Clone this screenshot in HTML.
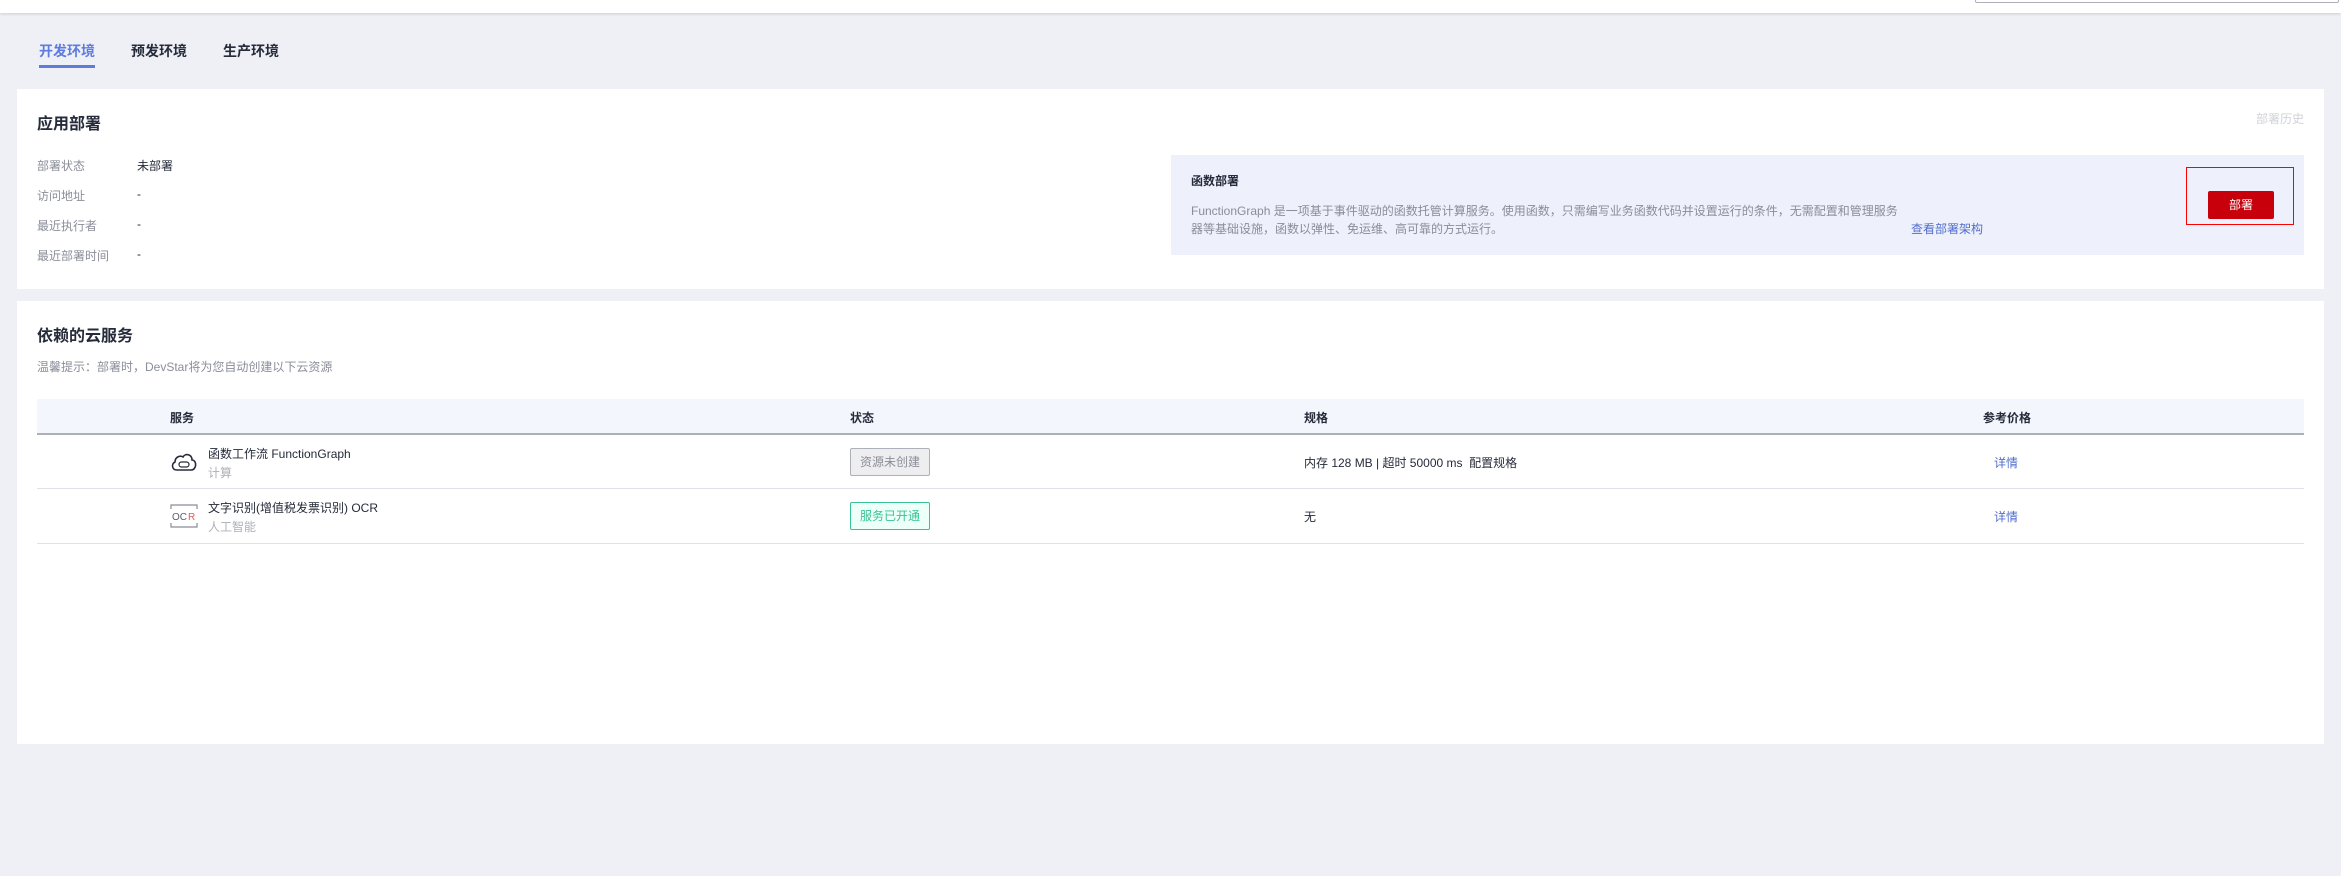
<!DOCTYPE html>
<html><head><meta charset="utf-8"><style>
*{margin:0;padding:0;box-sizing:border-box}
body{width:2341px;height:876px;background:#eff0f5;font-family:"Liberation Sans","Noto Sans CJK SC",sans-serif;position:relative;overflow:hidden;color:#252b3a}
.a{position:absolute;white-space:nowrap}
.lab{font-size:12px;color:#8a8e99}
.val{font-size:12px;color:#252b3a}
</style></head><body>
<div class="a" style="left:0;top:0;width:2341px;height:13px;background:#fff;box-shadow:0 1px 3px rgba(0,0,0,.15)"></div>
<div class="a" style="left:1975px;top:-2px;width:364px;height:5px;border:1px solid #adb0b8;border-top:none;border-radius:0 0 2px 2px;background:#fff"></div>

<div class="a" style="left:39px;top:41px;font-size:14px;font-weight:bold;color:#5e7ce0">开发环境</div>
<div class="a" style="left:39px;top:65px;width:56px;height:3px;background:#5e7ce0"></div>
<div class="a" style="left:131px;top:41px;font-size:14px;font-weight:bold">预发环境</div>
<div class="a" style="left:223px;top:41px;font-size:14px;font-weight:bold">生产环境</div>

<div class="a" style="left:17px;top:89px;width:2307px;height:200px;background:#fff"></div>
<div class="a" style="left:37px;top:110px;font-size:16px;font-weight:bold">应用部署</div>
<div class="a" style="left:2256px;top:110px;font-size:12px;color:#d0d2d8">部署历史</div>
<div class="a lab" style="left:37px;top:157px">部署状态</div><div class="a val" style="left:137px;top:157px">未部署</div>
<div class="a lab" style="left:37px;top:187px">访问地址</div><div class="a val" style="left:137px;top:187px">-</div>
<div class="a lab" style="left:37px;top:217px">最近执行者</div><div class="a val" style="left:137px;top:217px">-</div>
<div class="a lab" style="left:37px;top:247px">最近部署时间</div><div class="a val" style="left:137px;top:247px">-</div>

<div class="a" style="left:1171px;top:155px;width:1133px;height:100px;background:#eef0fb"></div>
<div class="a" style="left:1191px;top:172px;font-size:12px;font-weight:bold">函数部署</div>
<div class="a" style="left:1191px;top:202px;font-size:12px;color:#8a8e99;line-height:18px">FunctionGraph 是一项基于事件驱动的函数托管计算服务。使用函数，只需编写业务函数代码并设置运行的条件，无需配置和管理服务<br>器等基础设施，函数以弹性、免运维、高可靠的方式运行。</div>
<div class="a" style="left:1911px;top:220px;font-size:12px;color:#526ecc">查看部署架构</div>
<div class="a" style="left:2186px;top:167px;width:108px;height:58px;border:1px solid #f00"></div>
<div class="a" style="left:2208px;top:191px;width:66px;height:28px;background:#c7000b;border-radius:2px;color:#fff;font-size:12px;text-align:center;line-height:28px">部署</div>

<div class="a" style="left:17px;top:301px;width:2307px;height:443px;background:#fff"></div>
<div class="a" style="left:37px;top:322px;font-size:16px;font-weight:bold">依赖的云服务</div>
<div class="a lab" style="left:37px;top:358px">温馨提示：部署时，DevStar将为您自动创建以下云资源</div>

<div class="a" style="left:37px;top:399px;width:2267px;height:36px;background:#f3f6fc;border-bottom:2px solid #adb0b8"></div>
<div class="a" style="left:170px;top:409px;font-size:12px;font-weight:bold">服务</div>
<div class="a" style="left:850px;top:409px;font-size:12px;font-weight:bold">状态</div>
<div class="a" style="left:1304px;top:409px;font-size:12px;font-weight:bold">规格</div>
<div class="a" style="left:1983px;top:409px;font-size:12px;font-weight:bold">参考价格</div>

<svg class="a" style="left:170px;top:451px" width="28" height="22" viewBox="0 0 28 22"><path d="M7 19 C2 19 1 13 5 11 C5 6 10 4 13 6 C15 2 22 3 22 9 C27 9 27 19 21 19 Z" fill="none" stroke="#252b3a" stroke-width="1.6"/><rect x="9" y="11" width="10" height="5" rx="2.5" fill="none" stroke="#252b3a" stroke-width="1.2"/></svg>
<div class="a" style="left:208px;top:445px;font-size:12px">函数工作流 FunctionGraph</div>
<div class="a lab" style="left:208px;top:464px;color:#adb0b8">计算</div>
<div class="a" style="left:850px;top:448px;width:80px;height:28px;border:1px solid #adb0b8;background:#eeeef0;border-radius:2px;font-size:12px;color:#8a8e99;text-align:center;line-height:26px">资源未创建</div>
<div class="a val" style="left:1304px;top:454px">内存 128 MB | 超时 50000 ms &nbsp;配置规格</div>
<div class="a" style="left:1994px;top:454px;font-size:12px;color:#526ecc">详情</div>
<div class="a" style="left:37px;top:488px;width:2267px;height:1px;background:#dfe1e6"></div>

<svg class="a" style="left:170px;top:504px" width="28" height="24" viewBox="0 0 28 24"><path d="M1 5V1H27V5M1 19V23H27V19" fill="none" stroke="#8a8e99" stroke-width="1.2"/><text x="2" y="16" font-size="10" font-family="Liberation Sans" fill="#575d6c">OC</text><text x="18" y="16" font-size="10" font-family="Liberation Sans" fill="#e55">R</text></svg>
<div class="a" style="left:208px;top:499px;font-size:12px">文字识别(增值税发票识别) OCR</div>
<div class="a lab" style="left:208px;top:518px;color:#adb0b8">人工智能</div>
<div class="a" style="left:850px;top:502px;width:80px;height:28px;border:1px solid #3ac295;background:#edfff9;border-radius:2px;font-size:12px;color:#3ac295;text-align:center;line-height:26px">服务已开通</div>
<div class="a val" style="left:1304px;top:508px">无</div>
<div class="a" style="left:1994px;top:508px;font-size:12px;color:#526ecc">详情</div>
<div class="a" style="left:37px;top:543px;width:2267px;height:1px;background:#dfe1e6"></div>
</body></html>
